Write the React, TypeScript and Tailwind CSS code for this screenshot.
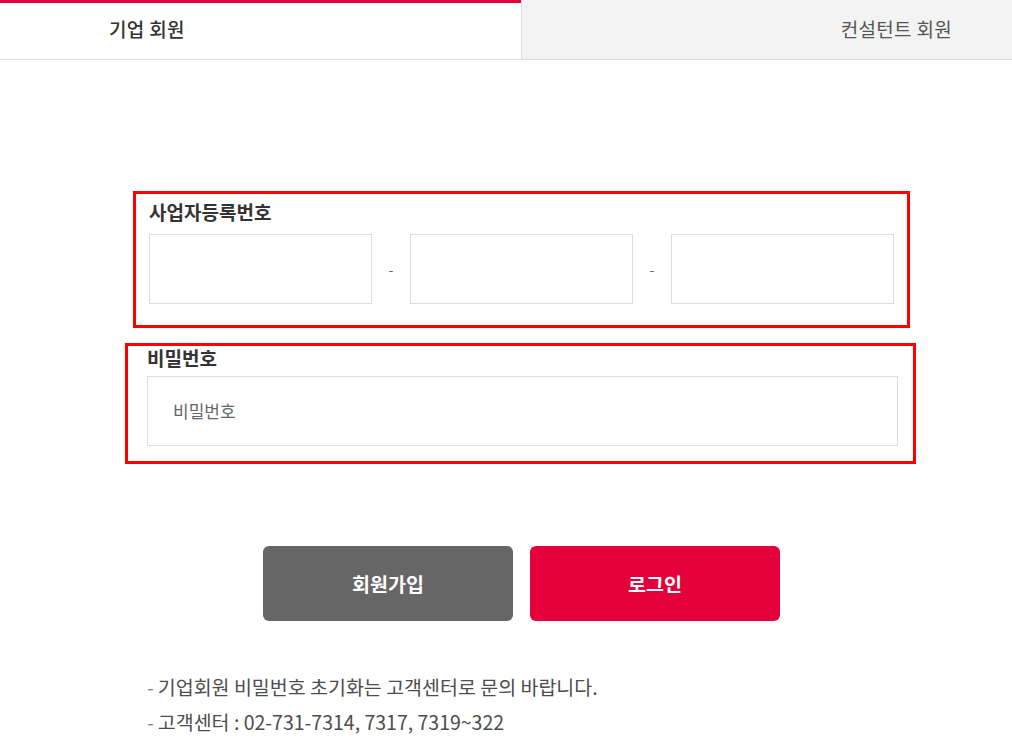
import React from "react";

const font = { fontFamily: '"Noto Sans CJK KR", "Noto Sans", sans-serif' };

export default function App() {
  return (
    <div className="w-[1012px] h-[747px] bg-white overflow-hidden" style={font}>
      {/* Tabs */}
      <div className="flex h-[60px] border-b border-[#dddddd]">
        <div className="w-[521px] border-t-[3px] border-[#e4003a] bg-white flex items-center pl-[109px] pb-[3px]">
          <span className="text-[19px] font-medium text-[#333333] tracking-[0.3px]">기업 회원</span>
        </div>
        <div className="flex-1 bg-[#f3f3f3] border-l border-[#dddddd] flex items-center justify-end pr-[60px]">
          <span className="text-[19px] text-[#555555] tracking-[0.3px]">컨설턴트 회원</span>
        </div>
      </div>

      {/* Business number box */}
      <div className="mt-[131px] ml-[133px] w-[777px] border-[3px] border-[#ff0000] pt-[5px] pl-[13px] pr-[11px] pb-[21px]">
        <div className="text-[19px] leading-[25px] font-bold text-[#333333] mb-[10px]">사업자등록번호</div>
        <div className="flex items-center">
          <div className="w-[223px] h-[70px] border border-[#dddddd]" />
          <div className="w-[38px] text-center text-[#666666] text-[14px]">-</div>
          <div className="w-[223px] h-[70px] border border-[#dddddd]" />
          <div className="w-[38px] text-center text-[#666666] text-[14px]">-</div>
          <div className="w-[223px] h-[70px] border border-[#dddddd]" />
        </div>
      </div>

      {/* Password box */}
      <div className="mt-[15px] ml-[125px] w-[791px] border-[3px] border-[#ff0000] pt-0 pl-[19px] pr-[15px] pb-[15px]">
        <div className="text-[19px] leading-[24px] font-bold text-[#333333] mb-[6px]">비밀번호</div>
        <div className="h-[70px] border border-[#dddddd] flex items-center pl-[25px]">
          <span className="text-[17px] text-[#666666]">비밀번호</span>
        </div>
      </div>

      {/* Buttons */}
      <div className="mt-[82px] ml-[263px] flex gap-[17px]">
        <div className="w-[250px] h-[75px] rounded-[6px] bg-[#666666] flex items-center justify-center">
          <span className="text-[19.5px] font-bold text-white">회원가입</span>
        </div>
        <div className="w-[250px] h-[75px] rounded-[6px] bg-[#e4003a] flex items-center justify-center">
          <span className="text-[19.5px] font-bold text-white">로그인</span>
        </div>
      </div>

      {/* Notes */}
      <div className="mt-[48px] ml-[147px] text-[19.5px] leading-[35px] text-[#4d4d4d]">
        <div><span className="text-[#888888] mr-[4px]">-</span>기업회원 비밀번호 초기화는 고객센터로 문의 바랍니다.</div>
        <div><span className="text-[#888888] mr-[4px]">-</span>고객센터 : 02-731-7314, 7317, 7319~322</div>
      </div>
    </div>
  );
}
